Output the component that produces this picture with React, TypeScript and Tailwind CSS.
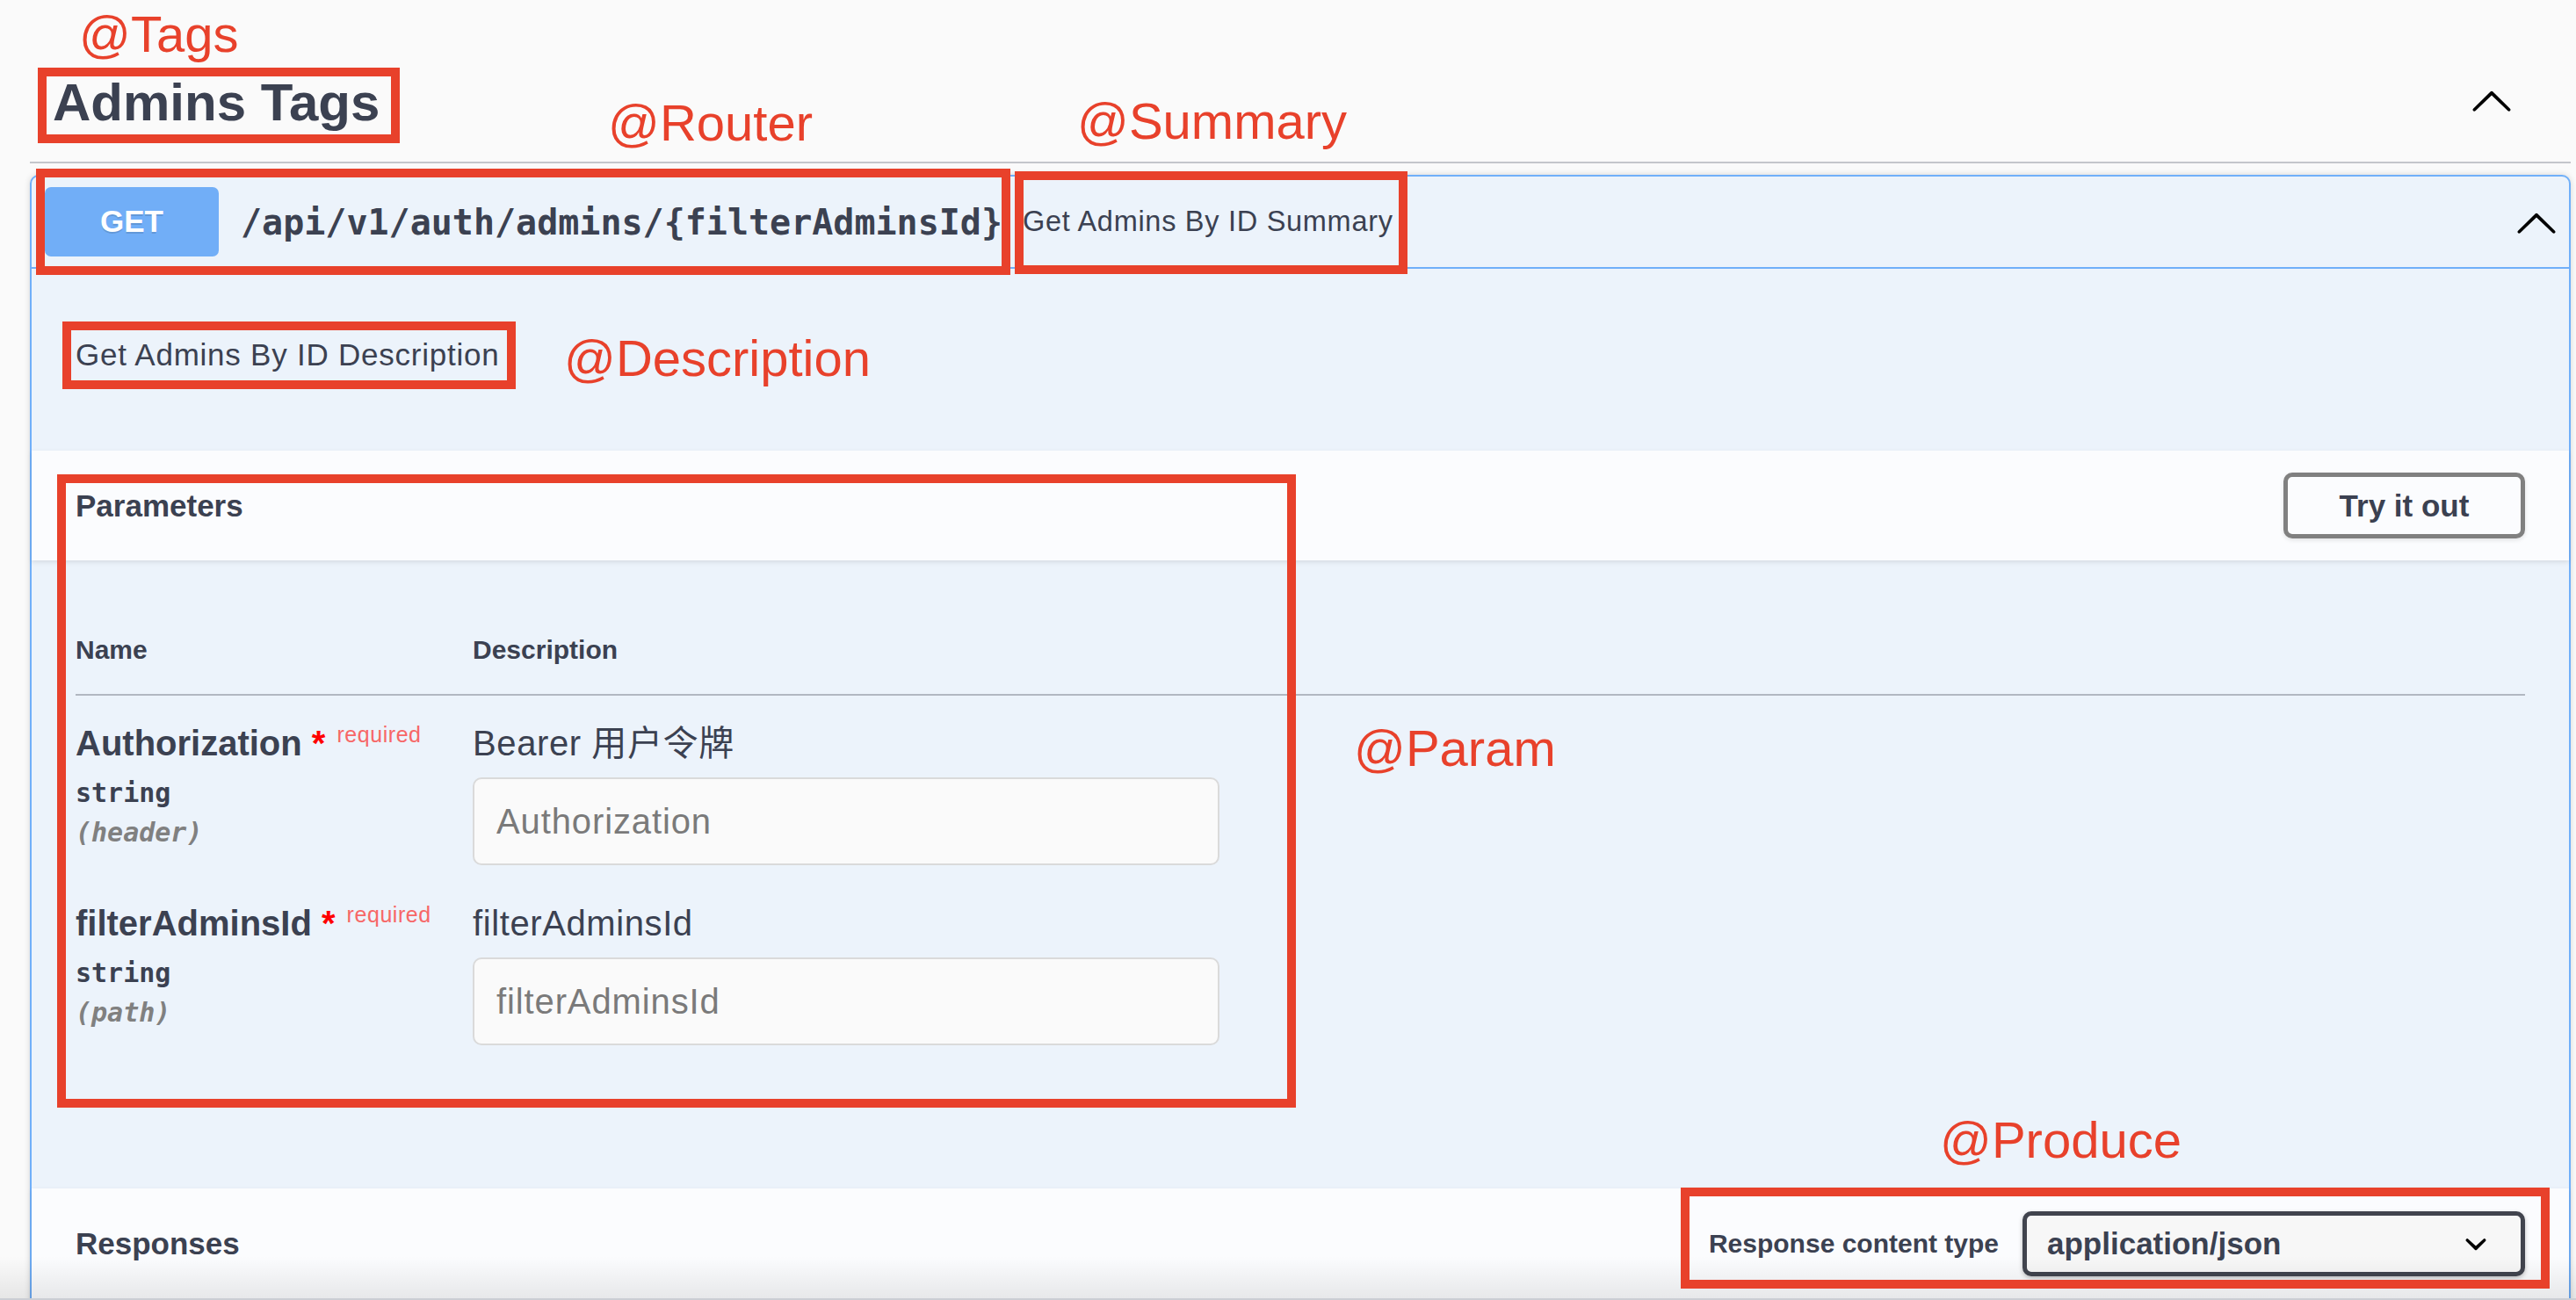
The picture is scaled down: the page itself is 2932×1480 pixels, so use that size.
import React from "react";

const ArrowUp = ({ className }: { className?: string }) => (
  <svg viewBox="0 0 20 20" className={className} fill="currentColor">
    <path d="M 17.418 14.908 C 17.69 15.176 18.127 15.176 18.397 14.908 C 18.667 14.64 18.668 14.207 18.397 13.939 L 10.489 6.109 C 10.219 5.841 9.782 5.841 9.51 6.109 L 1.602 13.939 C 1.332 14.207 1.332 14.64 1.602 14.908 C 1.873 15.176 2.311 15.176 2.581 14.908 L 10 7.767 L 17.418 14.908 Z" />
  </svg>
);

const ArrowDown = ({ className }: { className?: string }) => (
  <svg viewBox="0 0 20 20" className={className} fill="currentColor">
    <path d="M13.418 7.859a.695.695 0 01.978 0 .68.68 0 010 .969l-3.908 3.83a.697.697 0 01-.979 0l-3.908-3.83a.68.68 0 010-.969.695.695 0 01.978 0L10 11l3.418-3.141z" />
  </svg>
);

type Param = { name: string; type: string; inn: string; desc: string; placeholder: string };

const params: Param[] = [
  { name: "Authorization", type: "string", inn: "(header)", desc: "Bearer 用户令牌", placeholder: "Authorization" },
  { name: "filterAdminsId", type: "string", inn: "(path)", desc: "filterAdminsId", placeholder: "filterAdminsId" },
];

const Box = ({ className }: { className: string }) => (
  <div className={`absolute border-[10px] border-[#e8412b] pointer-events-none ${className}`} />
);

const Label = ({ className, text }: { className: string; text: string }) => (
  <div className={`absolute text-[58px] leading-none text-[#e8412b] whitespace-nowrap ${className}`}>{text}</div>
);

export default function App() {
  return (
    <div className="relative w-[2932px] h-[1480px] overflow-hidden bg-[#fafafa] pl-[34px] pr-[6px] text-[#3b4151] font-['Liberation_Sans','Noto_Sans_CJK_SC',Arial,sans-serif]">
      {/* Tag header */}
      <div className="flex items-center border-b-2 border-[#c4c6cb] pl-[26px] pr-[65px] pt-[87px] pb-[37px]">
        <h3 className="flex-1 text-[60px] leading-none font-bold">Admins Tags</h3>
        <ArrowUp className="w-[50px] h-[50px] -mt-[6px] text-black" />
      </div>

      {/* Opblock */}
      <div className="mt-[13px] border-2 border-[#70aff9] rounded-[10px] bg-[#ecf3fb] shadow-[0_0_7px_rgba(0,0,0,0.15)] pb-[200px]">
        {/* Summary */}
        <div className="flex items-center border-b-2 border-[#70aff9] pl-[15px] pr-[12px] py-[12px]">
          <div className="w-[198px] h-[79px] rounded-[7px] bg-[#71aef7] flex items-center justify-center text-white font-bold text-[35px] [text-shadow:0_2px_0_rgba(0,0,0,0.12)]">
            GET
          </div>
          <div className="pl-[25px] pr-[23px] font-['DejaVu_Sans_Mono',monospace] font-bold text-[40px] leading-none">
            /api/v1/auth/admins/{"{"}filterAdminsId{"}"}
          </div>
          <div className="flex-1 text-[32.5px] leading-none tracking-[0.022em]">Get Admins By ID Summary</div>
          <ArrowUp className="w-[50px] h-[50px] text-black" />
        </div>

        {/* Description */}
        <div className="pl-[50px] pt-[78px] pb-[89px]">
          <p className="text-[35px] leading-[40px] tracking-[0.022em]">Get Admins By ID Description</p>
        </div>

        {/* Parameters header */}
        <div className="h-[125px] flex items-center px-[50px] bg-[#fbfcfe] shadow-[0_2px_5px_rgba(0,0,0,0.1)]">
          <h4 className="flex-1 text-[35px] font-bold leading-none">Parameters</h4>
          <button className="w-[275px] h-[75px] border-[5px] border-[#808080] rounded-[10px] text-[35px] font-bold leading-none text-[#3b4151] shadow-[0_2px_5px_rgba(0,0,0,0.1)] bg-transparent">
            Try it out
          </button>
        </div>

        {/* Parameters table */}
        <div className="px-[50px] pb-[151px]">
          <div className="grid grid-cols-[452px_1fr] border-b-2 border-[#b1b7c1] pt-[85px] pb-[33px] text-[30px] font-bold leading-[34px]">
            <div>Name</div>
            <div>Description</div>
          </div>
          {params.map((p) => (
            <div key={p.name} className="grid grid-cols-[452px_1fr] pt-[31px] pb-[12px]">
              <div>
                <div className="text-[40px] font-bold leading-[46px] whitespace-nowrap">
                  {p.name}
                  <span className="text-[#ff0000]">&nbsp;*</span>
                  <span className="relative -top-[15px] pl-[13px] text-[25px] font-normal tracking-[0.022em] text-[#f76767]">required</span>
                </div>
                <div className="mt-[11px] font-['DejaVu_Sans_Mono',monospace] font-bold text-[30px] leading-[36px]">{p.type}</div>
                <div className="mt-[9px] font-['DejaVu_Sans_Mono',monospace] font-bold italic text-[30px] leading-[36px] text-[#808080]">
                  {p.inn}
                </div>
              </div>
              <div>
                <div className="text-[40px] leading-[46px] tracking-[0.015em]">{p.desc}</div>
                <input
                  readOnly
                  placeholder={p.placeholder}
                  className="block mt-[16px] w-[850px] h-[100px] border-2 border-[#dadada] rounded-[10px] bg-[#fafafa] px-[25px] text-[40px] tracking-[0.022em] outline-none placeholder:text-[#7a7a7a]"
                />
              </div>
            </div>
          ))}
        </div>

        {/* Responses header */}
        <div className="h-[125px] flex items-center px-[50px] bg-[#fbfcfe] shadow-[0_2px_5px_rgba(0,0,0,0.1)]">
          <h4 className="flex-1 text-[35px] font-bold leading-none">Responses</h4>
          <span className="text-[30px] font-bold mr-[27px] leading-none">Response content type</span>
          <div className="relative w-[572px] h-[74px] border-[5px] border-[#41444e] rounded-[10px] bg-[#f7f7f7] shadow-[0_2px_5px_rgba(0,0,0,0.25)] flex items-center pl-[23px]">
            <span className="text-[35px] font-bold leading-none">application/json</span>
            <ArrowDown className="absolute right-[26px] top-1/2 -translate-y-1/2 w-[50px] h-[50px] text-black" />
          </div>
        </div>
      </div>

      {/* bottom fade */}
      <div className="absolute inset-x-0 bottom-0 h-[50px] bg-linear-to-b from-transparent to-black/[0.08] border-b-2 border-[#cbced4] pointer-events-none" />

      {/* Annotations */}
      <Box className="left-[43px] top-[77px] w-[412px] h-[86px]" />
      <Box className="left-[41px] top-[192px] w-[1109px] h-[121px]" />
      <Box className="left-[1155px] top-[195px] w-[447px] h-[117px]" />
      <Box className="left-[71px] top-[366px] w-[516px] h-[77px]" />
      <Box className="left-[65px] top-[540px] w-[1410px] h-[721px]" />
      <Box className="left-[1913px] top-[1352px] w-[989px] h-[115px]" />

      <Label className="left-[90px] top-[10px]" text="@Tags" />
      <Label className="left-[692px] top-[111px]" text="@Router" />
      <Label className="left-[1226px] top-[109px]" text="@Summary" />
      <Label className="left-[642px] top-[379px]" text="@Description" />
      <Label className="left-[1541px] top-[823px]" text="@Param" />
      <Label className="left-[2208px] top-[1269px]" text="@Produce" />
    </div>
  );
}
